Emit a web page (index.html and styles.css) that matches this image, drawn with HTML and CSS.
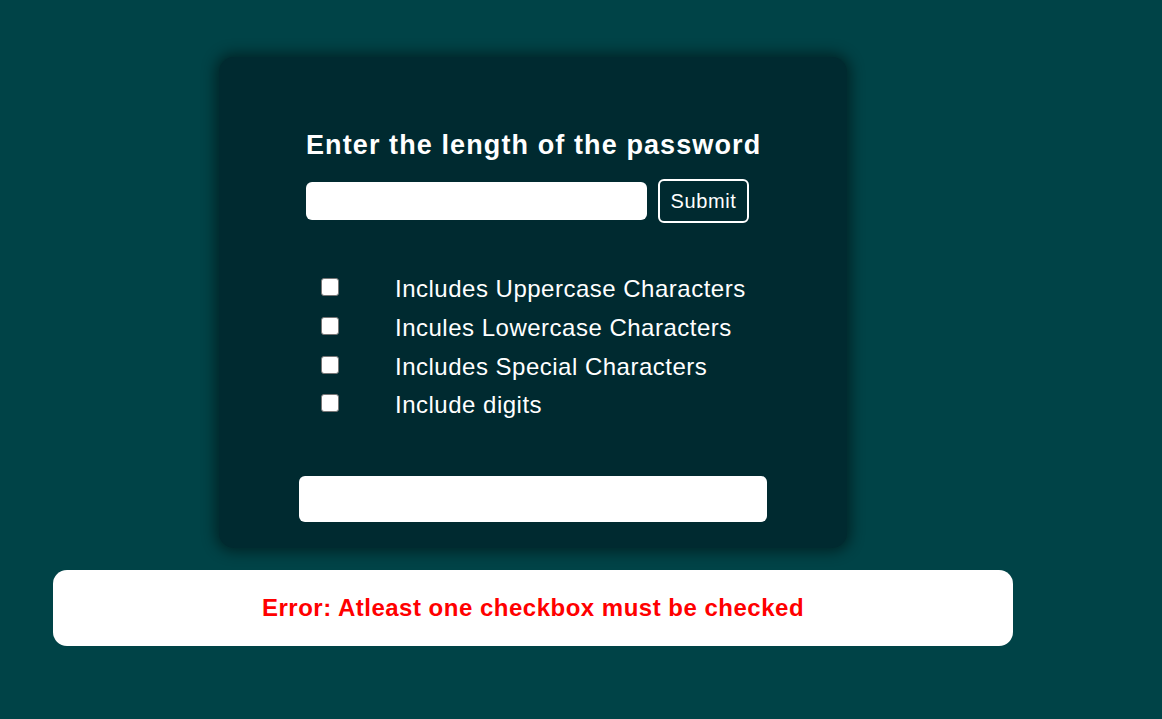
FILE: index.html
```html
<!DOCTYPE html>
<html>
<head>
<meta charset="utf-8">
<link rel="stylesheet" href="styles.css">
</head>
<body>
<div class="page">
  <div class="card">
    <h2 class="title">Enter the length of the password</h2>
    <div class="row">
      <input class="len" type="text">
      <button class="submit">Submit</button>
    </div>
    <div class="options">
      <label class="opt"><span class="box"><input type="checkbox"></span><span>Includes Uppercase Characters</span></label>
      <label class="opt"><span class="box"><input type="checkbox"></span><span>Incules Lowercase Characters</span></label>
      <label class="opt"><span class="box"><input type="checkbox"></span><span>Includes Special Characters</span></label>
      <label class="opt"><span class="box"><input type="checkbox"></span><span>Include digits</span></label>
    </div>
    <div class="output"></div>
  </div>
  <div class="error">Error: Atleast one checkbox must be checked</div>
</div>
</body>
</html>
```
FILE: styles.css
```css
html, body {
  margin: 0;
  padding: 0;
}
body {
  background: #004347;
  font-family: "Liberation Sans", Arial, sans-serif;
  color: #fff;
  height: 719px;
  overflow: hidden;
}
.page {
  width: 960px;
  margin-left: 53px;
  padding-top: 57px;
  display: flex;
  flex-direction: column;
  align-items: center;
}
.card {
  width: 628px;
  height: 491px;
  box-sizing: border-box;
  background: #002a30;
  border-radius: 15px;
  box-shadow: 0 0 14px 4px rgba(0, 0, 0, 0.45);
  padding: 71px 0 0 87px;
}
.title {
  margin: 0;
  font-size: 27px;
  letter-spacing: 1.1px;
  font-weight: bold;
  line-height: 34px;
}
.row {
  display: flex;
  align-items: center;
  gap: 11px;
  margin-top: 17px;
}
.len {
  width: 341px;
  height: 38px;
  box-sizing: border-box;
  border: none;
  border-radius: 6px;
  background: #fff;
  outline: none;
}
.submit {
  width: 91px;
  height: 44px;
  box-sizing: border-box;
  background: transparent;
  border: 2px solid #fff;
  border-radius: 6px;
  color: #fff;
  font-family: "Liberation Sans", Arial, sans-serif;
  font-size: 20px;
  letter-spacing: 0.6px;
  padding: 0;
}
.options {
  margin-top: 47px;
  display: flex;
  flex-direction: column;
}
.opt {
  display: flex;
  align-items: center;
  height: 38.7px;
  font-size: 24px;
  letter-spacing: 0.5px;
}
.box {
  width: 89px;
  display: flex;
  padding-left: 15px;
  box-sizing: border-box;
}
.box input {
  -webkit-appearance: none;
  appearance: none;
  width: 18px;
  height: 18px;
  box-sizing: border-box;
  margin: 0 0 4px 0;
  background: #fff;
  border: 1.5px solid #767676;
  border-radius: 3px;
}
.output {
  width: 468px;
  height: 46px;
  background: #fff;
  border-radius: 6px;
  margin: 51px 0 0 -7px;
}
.error {
  margin-top: 22px;
  width: 960px;
  height: 76px;
  background: #fff;
  border-radius: 14px;
  color: #ff0000;
  font-size: 24px;
  letter-spacing: 0.5px;
  font-weight: bold;
  display: flex;
  align-items: center;
  justify-content: center;
}
```
